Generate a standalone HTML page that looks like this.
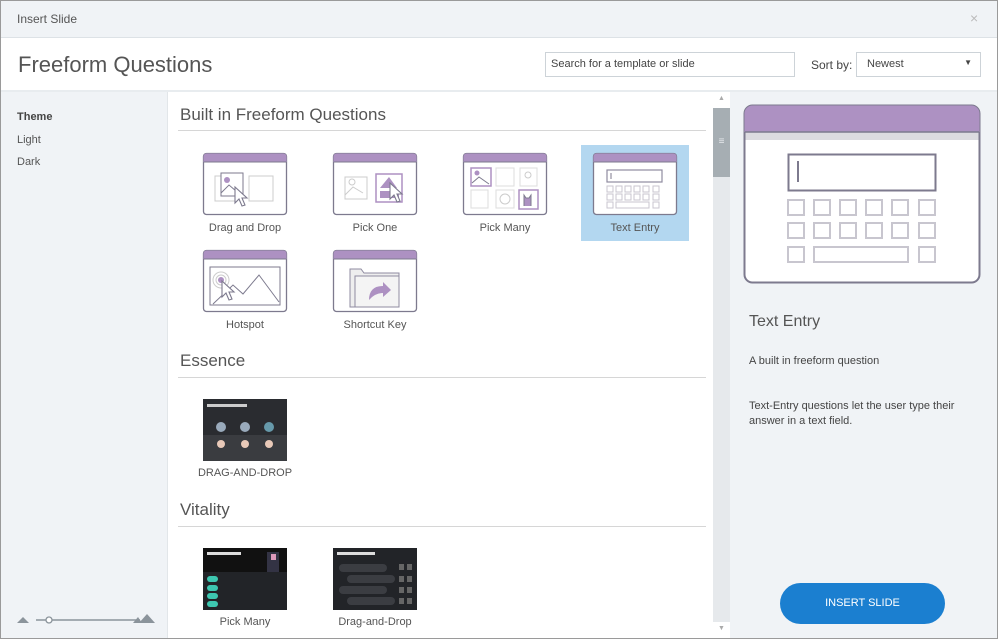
<!DOCTYPE html>
<html><head><meta charset="utf-8"><style>
*{box-sizing:border-box;margin:0;padding:0}
body{width:998px;height:639px;overflow:hidden;font-family:"Liberation Sans",sans-serif;background:#fff;position:relative;color:#444}
.a{position:absolute}
.t{font-size:11px;color:#555;text-align:center;width:130px}
.h{font-size:17px;color:#555}
.ln{height:1px;background:#d6d6d6;left:178px;width:528px}
</style></head><body>
<div class="a" style="left:0;top:0;width:998px;height:639px;border:1px solid #9a9a9a;z-index:10;pointer-events:none"></div>
<div class="a" style="left:0;top:0;width:998px;height:38px;background:#f0f3f6;border-bottom:1px solid #dde2e6"></div>
<div class="a" style="left:17px;top:12px;font-size:12px;color:#555">Insert Slide</div>
<div class="a" style="left:970px;top:10px;font-size:14px;color:#bbb">×</div>
<div class="a" style="left:18px;top:52px;font-size:22px;color:#555">Freeform Questions</div>
<div class="a" style="left:545px;top:52px;width:250px;height:25px;border:1px solid #cdd3d8;font-size:11px;padding:5px 5px;color:#444">Search for a template or slide</div>
<div class="a" style="left:811px;top:58px;font-size:12px;color:#444">Sort by:</div>
<div class="a" style="left:856px;top:52px;width:125px;height:25px;border:1px solid #cdd3d8;font-size:11px;padding:5px 10px;color:#444">Newest<span style="position:absolute;right:8px;top:5px;font-size:8px">▼</span></div>
<div class="a" style="left:0;top:90px;width:998px;height:2px;background:#e8ecef"></div>
<div class="a" style="left:1px;top:92px;width:167px;height:546px;background:#f0f3f6;border-right:1px solid #e2e6e9"></div>
<div class="a" style="left:17px;top:111px;font-size:11px;font-weight:bold;color:#444">Theme</div>
<div class="a" style="left:17px;top:134px;font-size:11px;color:#555">Light</div>
<div class="a" style="left:17px;top:156px;font-size:11px;color:#555">Dark</div>
<svg class="a" style="left:15px;top:612px" width="145" height="14"><polygon points="2,11 8,5 14,11" fill="#8b949b"/><line x1="21" y1="8" x2="125" y2="8" stroke="#8b949b" stroke-width="1.5"/><circle cx="34" cy="8" r="3" fill="#fff" stroke="#8b949b" stroke-width="1.3"/><polygon points="118,11 123,5 127,11" fill="#8b949b"/><polygon points="124,11 132,2 140,11" fill="#8b949b"/></svg>
<div class="a" style="left:713px;top:92px;width:17px;height:546px;background:#e6e9ec"></div>
<div class="a" style="left:713px;top:92px;width:17px;height:16px;background:#fff;font-size:7px;color:#aaa;text-align:center;padding-top:3px">▲</div>
<div class="a" style="left:713px;top:108px;width:17px;height:69px;background:#a6aeb3;color:#e6e9ec;text-align:center;font-size:10px;padding-top:28px">≡</div>
<div class="a" style="left:713px;top:622px;width:17px;height:16px;background:#fff;font-size:7px;color:#aaa;text-align:center;padding-top:3px">▼</div>
<div class="a" style="left:730px;top:92px;width:267px;height:546px;background:#f0f3f6"></div>
<div class="a h" style="left:180px;top:105px">Built in Freeform Questions</div>
<div class="a ln" style="top:130px"></div>
<div class="a" style="left:581px;top:145px;width:108px;height:96px;background:#b3d7f0"></div>
<svg class="a" style="left:0;top:0" width="710" height="639">
<defs>
<g id="fr"><rect x="0.5" y="0.5" width="83" height="61" rx="3" fill="#fff" stroke="#7d7a8e" stroke-width="1.3"/><path d="M0.5 9 V3.5 a3 3 0 0 1 3-3 H80.5 a3 3 0 0 1 3 3 V9Z" fill="#ad91c2"/><line x1="1" y1="9" x2="83" y2="9" stroke="#7d7a8e"/></g>
<path id="cur" d="M0 0 L0 16 L4 12 L7 19 L10 18 L7 11 L12 11Z" fill="#fff" stroke="#7d7a8e" stroke-width="1.1"/>
</defs>
<g transform="translate(203,153)"><use href="#fr"/><rect x="12" y="23" width="22" height="25" fill="none" stroke="#ccc"/><rect x="46" y="23" width="24" height="25" fill="none" stroke="#ccc"/><rect x="18" y="20" width="22" height="23" fill="#fff" stroke="#7d7a8e"/><circle cx="24" cy="27" r="3" fill="#ad91c2"/><path d="M18 40 L26 32 L33 38" fill="none" stroke="#7d7a8e"/><use href="#cur" transform="translate(32,34)"/></g>
<g transform="translate(333,153)"><use href="#fr"/><rect x="12" y="24" width="22" height="22" fill="none" stroke="#ccc"/><path d="M12 42 L20 34 L30 40" fill="none" stroke="#ccc"/><circle cx="19" cy="29" r="3" fill="none" stroke="#ccc"/><rect x="43" y="21" width="26" height="28" fill="#fff" stroke="#ad91c2" stroke-width="1.5"/><path d="M47 35 L56 24 L64 35Z M47 38 H66 V45 H47Z" fill="#ad91c2"/><use href="#cur" transform="translate(57,30)"/></g>
<g transform="translate(463,153)"><use href="#fr"/><rect x="8" y="15" width="20" height="18" fill="#fff" stroke="#ad91c2" stroke-width="1.5"/><circle cx="14" cy="20" r="2.5" fill="#ad91c2"/><path d="M9 30 L16 24 L26 31" fill="none" stroke="#7d7a8e"/><rect x="33" y="15" width="18" height="18" fill="none" stroke="#ddd"/><rect x="57" y="15" width="17" height="18" fill="none" stroke="#ddd"/><circle cx="65" cy="22" r="3" fill="none" stroke="#ccc"/><rect x="8" y="37" width="17" height="18" fill="none" stroke="#ddd"/><rect x="33" y="37" width="18" height="18" fill="none" stroke="#ddd"/><circle cx="42" cy="46" r="5" fill="none" stroke="#ccc"/><rect x="56" y="37" width="19" height="19" fill="#fff" stroke="#ad91c2" stroke-width="1.5"/><path d="M61 53 V42 L63 45 H66 L68 42 V53" fill="#ad91c2" stroke="#7d7a8e"/></g>
<g transform="translate(593,153)"><use href="#fr"/><rect x="14" y="17" width="55" height="12" fill="none" stroke="#8f8ba0" stroke-width="1.2"/><line x1="18" y1="20" x2="18" y2="26" stroke="#7d7a8e"/>
<g fill="none" stroke="#c8c6cf"><rect x="14" y="33" width="6" height="6"/><rect x="23" y="33" width="6" height="6"/><rect x="32" y="33" width="6" height="6"/><rect x="41" y="33" width="6" height="6"/><rect x="50" y="33" width="6" height="6"/><rect x="60" y="33" width="6" height="6"/><rect x="14" y="41" width="6" height="6"/><rect x="23" y="41" width="6" height="6"/><rect x="32" y="41" width="6" height="6"/><rect x="41" y="41" width="6" height="6"/><rect x="50" y="41" width="6" height="6"/><rect x="60" y="41" width="6" height="6"/><rect x="14" y="49" width="6" height="6"/><rect x="23" y="49" width="33" height="6"/><rect x="60" y="49" width="6" height="6"/></g></g>
<g transform="translate(203,250)"><use href="#fr"/><rect x="7" y="17" width="70" height="38" fill="none" stroke="#7d7a8e"/><path d="M10 54 L30 35 L40 44 L56 25 L76 52" fill="none" stroke="#7d7a8e"/><circle cx="18" cy="30" r="8" fill="none" stroke="#ccc"/><circle cx="18" cy="30" r="5" fill="none" stroke="#ccc"/><circle cx="18" cy="30" r="3" fill="#ad91c2"/><use href="#cur" transform="translate(19,31)"/></g>
<g transform="translate(333,250)"><use href="#fr"/><path d="M17 57 V19 H28 L31 23 H66 V57Z" fill="#eee" stroke="#8f8ba0"/><rect x="22" y="26" width="44" height="31" fill="#f4f4f4" stroke="#8f8ba0"/><path d="M36 50 Q36 36 50 36 V32 L58 40 L50 47 V43 Q42 43 36 50Z" fill="#ad91c2"/></g>
<g transform="translate(203,399)"><rect width="84" height="62" fill="#2a2c30"/><rect y="36" width="84" height="26" fill="#3a3c40"/><rect x="4" y="5" width="40" height="3" fill="#ccc"/><circle cx="18" cy="28" r="5" fill="#9ab"/><circle cx="42" cy="28" r="5" fill="#9ab"/><circle cx="66" cy="28" r="5" fill="#69a"/><circle cx="18" cy="45" r="4" fill="#e8c9b8"/><circle cx="42" cy="45" r="4" fill="#e8c9b8"/><circle cx="66" cy="45" r="4" fill="#e8c9b8"/></g>
<g transform="translate(203,548)"><rect width="84" height="62" fill="#222428"/><rect width="84" height="24" fill="#111"/><rect x="4" y="4" width="34" height="3" fill="#ddd"/><rect x="64" y="4" width="12" height="20" fill="#334"/><rect x="68" y="6" width="5" height="6" fill="#d9b"/><g fill="#3dc7b0"><rect x="4" y="28" width="11" height="6" rx="3"/><rect x="4" y="37" width="11" height="6" rx="3"/><rect x="4" y="45" width="11" height="6" rx="3"/><rect x="4" y="53" width="11" height="6" rx="3"/></g></g>
<g transform="translate(333,548)"><rect width="84" height="62" fill="#222428"/><rect x="4" y="4" width="38" height="3" fill="#ddd"/><g fill="#3b3d42"><rect x="6" y="16" width="48" height="8" rx="4"/><rect x="14" y="27" width="48" height="8" rx="4"/><rect x="6" y="38" width="48" height="8" rx="4"/><rect x="14" y="49" width="48" height="8" rx="4"/></g><g fill="#666"><rect x="66" y="16" width="5" height="6"/><rect x="74" y="16" width="5" height="6"/><rect x="66" y="28" width="5" height="6"/><rect x="74" y="28" width="5" height="6"/><rect x="66" y="39" width="5" height="6"/><rect x="74" y="39" width="5" height="6"/><rect x="66" y="50" width="5" height="6"/><rect x="74" y="50" width="5" height="6"/></g></g>
</svg>
<div class="a t" style="left:180px;top:222px">Drag and Drop</div>
<div class="a t" style="left:310px;top:222px">Pick One</div>
<div class="a t" style="left:440px;top:222px">Pick Many</div>
<div class="a t" style="left:570px;top:222px">Text Entry</div>
<div class="a t" style="left:180px;top:319px">Hotspot</div>
<div class="a t" style="left:310px;top:319px">Shortcut Key</div>
<div class="a h" style="left:180px;top:351px">Essence</div>
<div class="a ln" style="top:377px"></div>
<div class="a t" style="left:180px;top:467px">DRAG-AND-DROP</div>
<div class="a h" style="left:180px;top:500px">Vitality</div>
<div class="a ln" style="top:526px"></div>
<div class="a t" style="left:180px;top:616px">Pick Many</div>
<div class="a t" style="left:310px;top:616px">Drag-and-Drop</div>
<svg class="a" style="left:743px;top:104px" width="238" height="180">
<rect x="1.5" y="1.5" width="235" height="177" rx="8" fill="#fff" stroke="#7d7a8e" stroke-width="2"/>
<path d="M1.5 28 V9.5 a8 8 0 0 1 8-8 H228.5 a8 8 0 0 1 8 8 V28Z" fill="#ad91c2"/>
<rect x="2.5" y="28" width="233" height="8" fill="#dcdbe0"/>
<line x1="2" y1="28" x2="236" y2="28" stroke="#7d7a8e" stroke-width="1.5"/>
<rect x="45.5" y="50.5" width="147" height="36" fill="none" stroke="#7d7a8e" stroke-width="2"/>
<line x1="55" y1="57" x2="55" y2="78" stroke="#7d7a8e" stroke-width="2"/>
<g fill="none" stroke="#c8c6cf" stroke-width="2">
<rect x="45" y="96" width="16" height="15"/><rect x="71" y="96" width="16" height="15"/><rect x="97" y="96" width="16" height="15"/><rect x="123" y="96" width="16" height="15"/><rect x="149" y="96" width="16" height="15"/><rect x="176" y="96" width="16" height="15"/>
<rect x="45" y="119" width="16" height="15"/><rect x="71" y="119" width="16" height="15"/><rect x="97" y="119" width="16" height="15"/><rect x="123" y="119" width="16" height="15"/><rect x="149" y="119" width="16" height="15"/><rect x="176" y="119" width="16" height="15"/>
<rect x="45" y="143" width="16" height="15"/><rect x="71" y="143" width="94" height="15"/><rect x="176" y="143" width="16" height="15"/></g>
</svg>
<div class="a" style="left:749px;top:313px;font-size:16px;color:#555">Text Entry</div>
<div class="a" style="left:749px;top:355px;font-size:11px;color:#444">A built in freeform question</div>
<div class="a" style="left:749px;top:399px;font-size:11px;color:#444;line-height:15px;width:230px">Text-Entry questions let the user type their answer in a text field.</div>
<div class="a" style="left:780px;top:583px;width:165px;height:41px;border-radius:21px;background:#1b7fd0;color:#fff;font-size:11px;text-align:center;line-height:41px">INSERT SLIDE</div>
</body></html>
